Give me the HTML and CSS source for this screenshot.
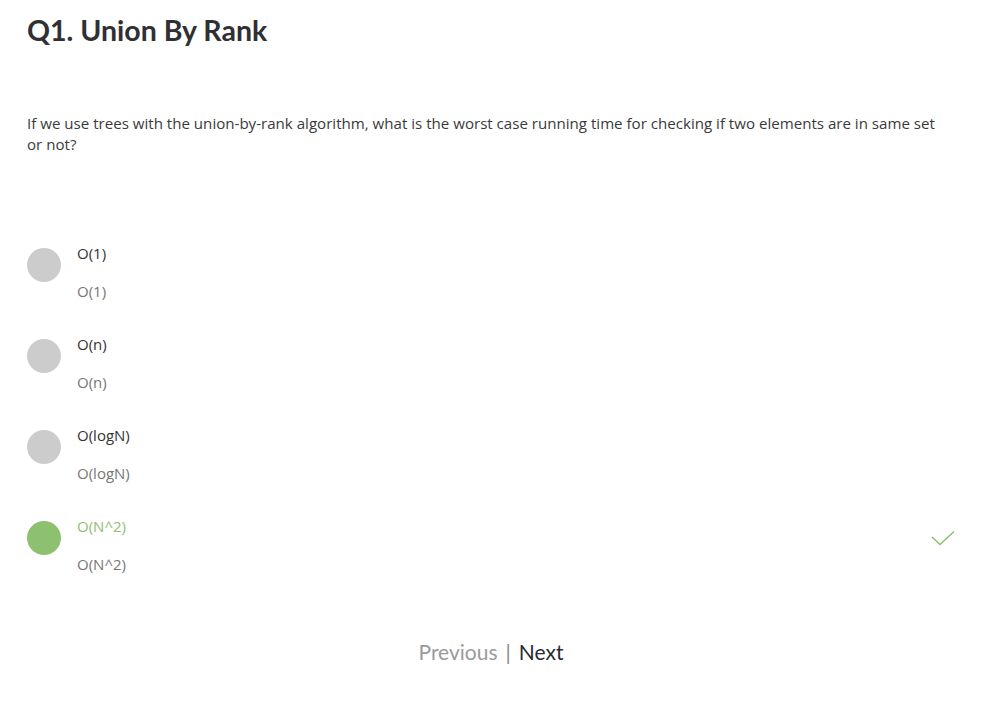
FILE: index.html
```html
<!DOCTYPE html>
<html>
<head>
<meta charset="utf-8">
<link rel="stylesheet" href="styles.css">
</head>
<body>
<div class="page">
  <h1 class="title">Q1. Union By Rank</h1>
  <p class="question">If we use trees with the union-by-rank algorithm, what is the worst case running time for checking if two elements are in same set or not?</p>
  <div class="options">
    <div class="option">
      <span class="dot"></span>
      <div class="labels">
        <div class="label">O(1)</div>
        <div class="sub">O(1)</div>
      </div>
    </div>
    <div class="option">
      <span class="dot"></span>
      <div class="labels">
        <div class="label">O(n)</div>
        <div class="sub">O(n)</div>
      </div>
    </div>
    <div class="option">
      <span class="dot"></span>
      <div class="labels">
        <div class="label">O(logN)</div>
        <div class="sub">O(logN)</div>
      </div>
    </div>
    <div class="option correct">
      <span class="dot"></span>
      <div class="labels">
        <div class="label">O(N^2)</div>
        <div class="sub">O(N^2)</div>
      </div>
      <svg class="check" width="24" height="16" viewBox="0 0 24 16"><path d="M1 7 L9 14.5 L23 1.5" fill="none" stroke="#8dc06f" stroke-width="1.5"/></svg>
    </div>
  </div>
  <div class="nav">
    <span class="prev">Previous</span>
    <span class="sep">|</span>
    <span class="next">Next</span>
  </div>
</div>
</body>
</html>
```
FILE: styles.css
```css
html, body {
  margin: 0;
  padding: 0;
  background: #fff;
}
body {
  font-family: "Open Sans", "Noto Sans", sans-serif;
  color: #333;
}
.page {
  padding: 13px 30px 0 27px;
}
.title {
  margin: 0;
  font-family: "Lato", "Open Sans", sans-serif;
  font-size: 28.5px;
  font-weight: 700;
  color: #2f2f34;
  line-height: 34px;
}
.question {
  margin: 66px 0 0;
  font-size: 15.1px;
  line-height: 21px;
  color: #3a3a3a;
  max-width: 920px;
}
.options {
  margin-top: 89px;
  display: flex;
  flex-direction: column;
  gap: 35px;
}
.option {
  display: flex;
  align-items: flex-start;
  gap: 16px;
}
.dot {
  width: 34px;
  height: 34px;
  margin-top: 4px;
  border-radius: 50%;
  background: #cccccc;
  flex: none;
}
.labels {
  flex: 1;
  display: flex;
  flex-direction: column;
  gap: 20px;
  font-size: 15px;
  line-height: 18px;
}
.label { color: #333; }
.sub { color: #777; }
.correct .dot { background: #8dc06f; }
.correct .label { color: #8dc06f; }
.check { flex: none; margin-top: 13px; }
.nav {
  margin-top: 66px;
  display: flex;
  justify-content: center;
  gap: 8px;
  font-family: "Lato", "Open Sans", sans-serif;
  font-size: 21px;
  line-height: 26px;
}
.prev { color: #9a9a9a; }
.sep { color: #888; }
.next { color: #2a2a30; }
```
